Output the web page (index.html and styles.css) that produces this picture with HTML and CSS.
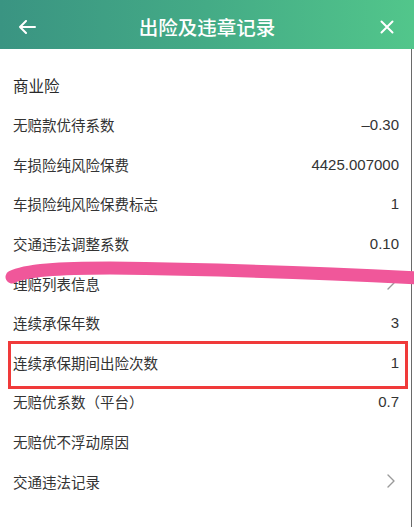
FILE: index.html
```html
<!DOCTYPE html>
<html lang="zh">
<head>
<meta charset="utf-8">
<title>出险及违章记录</title>
<link rel="stylesheet" href="styles.css">
</head>
<body>
<div class="page">
  <header class="topbar">
    <span class="icon-btn back">
      <svg width="18" height="14" viewBox="0 0 18 14"><path d="M17 7H2M8 1L2 7l6 6" fill="none" stroke="#fff" stroke-width="2" stroke-linecap="round" stroke-linejoin="round"/></svg>
    </span>
    <h1 class="title">出险及违章记录</h1>
    <span class="icon-btn close">
      <svg width="14" height="14" viewBox="0 0 14 14"><path d="M1.5 1.5l11 11M12.5 1.5l-11 11" fill="none" stroke="#fff" stroke-width="2" stroke-linecap="round"/></svg>
    </span>
  </header>
  <main class="content">
    <div class="section-title">商业险</div>
    <div class="row"><span class="label">无赔款优待系数</span><span class="value">–0.30</span></div>
    <div class="row"><span class="label">车损险纯风险保费</span><span class="value">4425.007000</span></div>
    <div class="row"><span class="label">车损险纯风险保费标志</span><span class="value">1</span></div>
    <div class="row"><span class="label">交通违法调整系数</span><span class="value">0.10</span></div>
    <div class="row link"><span class="label">理赔列表信息</span><span class="chev"><svg width="8" height="14" viewBox="0 0 8 14"><path d="M1 1l6 6-6 6" fill="none" stroke="#9a9a9a" stroke-width="1.4" stroke-linecap="round" stroke-linejoin="round"/></svg></span></div>
    <div class="row"><span class="label">连续承保年数</span><span class="value">3</span></div>
    <div class="row"><span class="label">连续承保期间出险次数</span><span class="value">1</span></div>
    <div class="row"><span class="label">无赔优系数（平台）</span><span class="value">0.7</span></div>
    <div class="row"><span class="label">无赔优不浮动原因</span><span class="value"></span></div>
    <div class="row link"><span class="label">交通违法记录</span><span class="chev"><svg width="8" height="14" viewBox="0 0 8 14"><path d="M1 1l6 6-6 6" fill="none" stroke="#9a9a9a" stroke-width="1.4" stroke-linecap="round" stroke-linejoin="round"/></svg></span></div>
  </main>
  <svg class="scribble" width="414" height="527" viewBox="0 0 414 527"><path d="M12 277C25 270 60 268 110 268C200 269 300 272 420 278" fill="none" stroke="#f0579a" stroke-width="13" stroke-linecap="round"/></svg>
  <div class="highlight"></div>
</div>
</body>
</html>
```
FILE: styles.css
```css
* { box-sizing: border-box; }
html, body { margin: 0; padding: 0; }
body {
  background: #fff;
  font-family: "Liberation Sans", "Noto Sans CJK SC", sans-serif;
  color: #333;
}
.page {
  position: relative;
  width: 414px;
  height: 527px;
  overflow: hidden;
}
.topbar {
  height: 49px;
  display: flex;
  align-items: center;
  justify-content: space-between;
  padding: 0 17px 0 17px;
  background: linear-gradient(90deg, #3a9482 0%, #44ab86 50%, #52c68b 100%);
}
.icon-btn {
  width: 20px;
  display: flex;
  align-items: center;
  justify-content: center;
  padding-top: 4px;
}
.title {
  margin: 0;
  font-family: "Noto Sans CJK SC", sans-serif;
  font-size: 19.5px;
  font-weight: 500;
  color: #fff;
  letter-spacing: 0;
  padding-top: 3px;
}
.content {
  padding-top: 16px;
  margin-right: 2px;
  border-right: 1px solid #6a6a6a;
  height: 478px;
}
.section-title {
  height: 40px;
  display: flex;
  align-items: center;
  padding-left: 13px;
  font-family: "Noto Sans CJK SC", sans-serif;
  font-size: 15.5px;
  font-weight: 400;
  color: #2a2a2a;
}
.row {
  height: 39.6px;
  display: flex;
  align-items: center;
  justify-content: space-between;
  padding: 0 12px 0 13px;
}
.row.link { padding-right: 16px; }
.label {
  font-family: "Noto Sans CJK SC", sans-serif;
  font-size: 14.5px;
  color: #333;
}
.value {
  font-family: "Liberation Sans", sans-serif;
  font-size: 15px;
  color: #333;
}
.chev { display: flex; align-items: center; }
.scribble {
  position: absolute;
  left: 0;
  top: 0;
  pointer-events: none;
}
.highlight {
  position: absolute;
  left: 8px;
  top: 341px;
  width: 400px;
  height: 48px;
  border: 3px solid #f03a3a;
}
```
